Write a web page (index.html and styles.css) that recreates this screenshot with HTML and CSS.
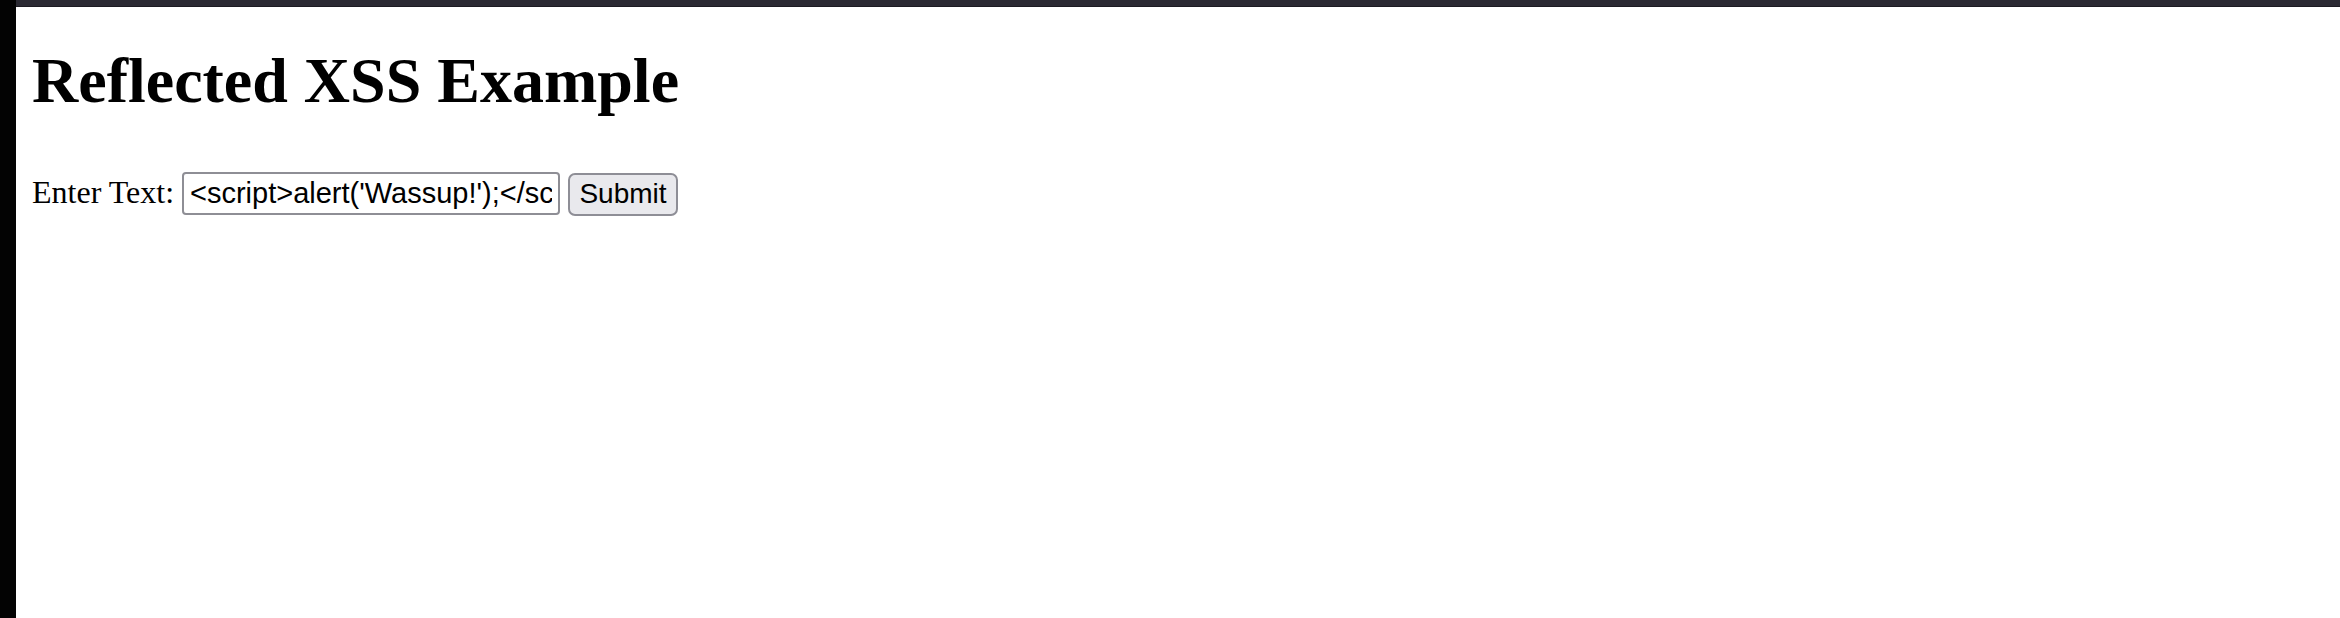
FILE: index.html
```html
<!DOCTYPE html>
<html lang="en">
<head>
<meta charset="utf-8">
<title>Reflected XSS Example</title>
<link rel="stylesheet" href="styles.css">
</head>
<body>
<div class="window">
  <div class="edge"></div>
  <div class="viewport">
    <div class="chrome"></div>
    <main class="page">
      <h1 class="title">Reflected XSS Example</h1>
      <form class="form">
        <label class="label" for="text">Enter Text:</label>
        <input class="field" id="text" type="text" value="<script>alert('Wassup!');</script>">
        <button class="btn" type="button">Submit</button>
      </form>
    </main>
  </div>
</div>
</body>
</html>
```

FILE: styles.css
```css
html, body {
  margin: 0;
  padding: 0;
  height: 100%;
  background: #ffffff;
}

.window {
  display: flex;
  height: 618px;
  overflow: hidden;
}

.edge {
  width: 16px;
  flex: none;
  background: #030303;
}

.viewport {
  flex: 1;
  display: flex;
  flex-direction: column;
  background: #ffffff;
}

.chrome {
  height: 6px;
  flex: none;
  background: #2b2a33;
  border-bottom: 1px solid #1c1b22;
}

.page {
  padding: 38px 16px 0 16px;
  font-family: "Liberation Serif", "Times New Roman", serif;
  color: #000000;
}

.title {
  margin: 0;
  font-size: 64px;
  line-height: 72px;
  font-weight: bold;
}

.form {
  display: flex;
  align-items: baseline;
  gap: 8px;
  margin-top: 55px;
}

.label {
  font-size: 32px;
}

.field {
  box-sizing: border-box;
  width: 378px;
  height: 43px;
  margin: 0;
  padding: 0 6px;
  border: 2px solid #8e8e95;
  border-radius: 4px;
  font-family: "Liberation Sans", Arial, sans-serif;
  font-size: 29px;
  color: #000000;
  background: #ffffff;
  outline: none;
}

.btn {
  box-sizing: border-box;
  width: 110px;
  height: 43px;
  margin: 0;
  padding: 0;
  border: 2px solid #8e8e96;
  border-radius: 7px;
  background: #e9e9ed;
  font-family: "Liberation Sans", Arial, sans-serif;
  font-size: 28px;
  color: #000000;
}
```
